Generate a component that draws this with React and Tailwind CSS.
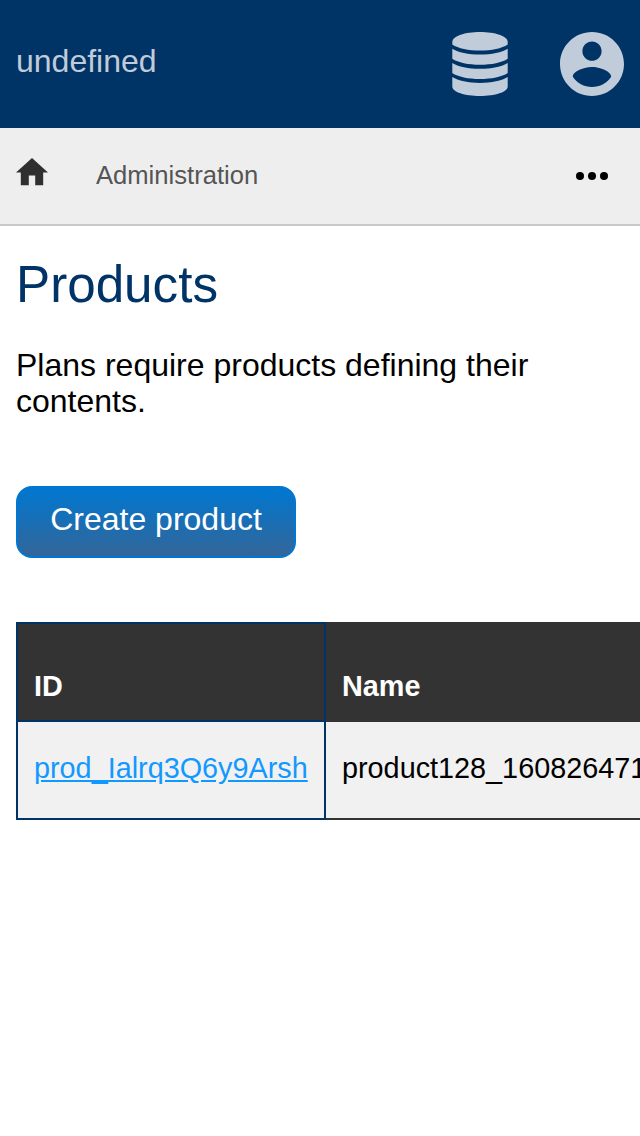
function DatabaseIcon() {
  return (
    <svg className="h-16 w-14" viewBox="0 0 56 64" fill="currentColor">
      <path d="M.3 12V10C.3 4 13 0 28 0S55.700 4 55.700 10V12.500C50 16.400 39.500 18.600 28 18.600S6 16.400 .3 12.500Z" />
      <path d="M.3 16.700C6 20.500 16.500 22.500 28 22.500S50 20.500 55.700 16.700V26.800C50 30.700 39.500 32.800 28 32.800S6 30.700 .3 26.800Z" />
      <path d="M.3 30.900C6 34.700 16.500 36.700 28 36.700S50 34.700 55.700 30.900V41C50 44.900 39.500 47 28 47S6 44.900 .3 41Z" />
      <path d="M.3 45.100C6 48.900 16.500 50.900 28 50.900S50 48.900 55.700 45.100V54.500C55.700 60 43 64 28 64S.3 60 .3 54.500Z" />
    </svg>
  );
}

function AccountIcon() {
  return (
    <svg className="size-16" viewBox="2 2 20 20" fill="currentColor">
      <path d="M12 2C6.480 2 2 6.480 2 12s4.480 10 10 10 10-4.480 10-10S17.520 2 12 2zm0 3c1.660 0 3 1.340 3 3s-1.340 3-3 3-3-1.340-3-3 1.340-3 3-3zm0 14.200c-2.500 0-4.710-1.280-6-3.220.03-1.990 4-3.080 6-3.080 1.990 0 5.970 1.090 6 3.080-1.290 1.940-3.500 3.220-6 3.220z" />
    </svg>
  );
}

export default function App() {
  return (
    <div className="min-h-[1136px] w-full overflow-hidden bg-white font-['Liberation_Sans',Arial,sans-serif] text-black">
      <header className="flex h-32 items-start justify-between bg-[#003366] px-4 pt-8 text-[#c0ccd9]">
        <span className="mt-[11px] text-[32px] leading-9">undefined</span>
        <div className="flex gap-[52px]">
          <DatabaseIcon />
          <AccountIcon />
        </div>
      </header>
      <nav className="flex h-[98px] items-center border-b-2 border-[#c8c8c8] bg-[#eee] pr-8 pl-4">
        <svg className="mb-2 h-[27.200px] w-8 text-[#2f2f2f]" viewBox="2 3 20 17" fill="currentColor">
          <path d="M10 20v-6h4v6h5v-8h3L12 3 2 12h3v8z" />
        </svg>
        <span className="mb-0.5 ml-12 text-[25.600px] leading-[30px] text-[#555]">Administration</span>
        <svg className="ml-auto h-2 w-8" viewBox="0 0 32 8" fill="currentColor">
          <circle cx="4" cy="4" r="4" />
          <circle cx="16" cy="4" r="4" />
          <circle cx="28" cy="4" r="4" />
        </svg>
      </nav>
      <main className="pt-[29px] pl-4">
        <h1 className="text-[51.200px] leading-[60px] text-[#003366]">Products</h1>
        <p className="mt-8 pr-4 text-[32px] leading-9">
          Plans require products defining their contents.
        </p>
        <button className="mt-[67px] flex h-[72px] w-[280px] justify-center rounded-2xl border-2 border-[#0077d4] bg-[linear-gradient(to_bottom,#0077d0,#336699)] pt-[13px] text-[32px] leading-9 text-white">
          Create product
        </button>
        <table className="mt-16 w-[760px] table-fixed border-collapse text-left text-[28.800px] leading-8">
          <thead>
            <tr className="h-[98px] bg-[#333] text-white">
              <th className="w-[308px] border-2 border-[#003366] px-4 pt-7 align-middle font-bold">ID</th>
              <th className="border-2 border-[#333] px-4 pt-7 align-middle font-bold">Name</th>
            </tr>
          </thead>
          <tbody>
            <tr className="h-[98px] bg-[#f1f1f1]">
              <td className="border-2 border-[#003366] px-4 pb-1 align-middle">
                <a className="text-[#1199ff] underline" href="#product">prod_Ialrq3Q6y9Arsh</a>
              </td>
              <td className="border-2 border-[#333] px-4 pb-1 align-middle whitespace-nowrap">
                product128_1608264719
              </td>
            </tr>
          </tbody>
        </table>
      </main>
    </div>
  );
}
